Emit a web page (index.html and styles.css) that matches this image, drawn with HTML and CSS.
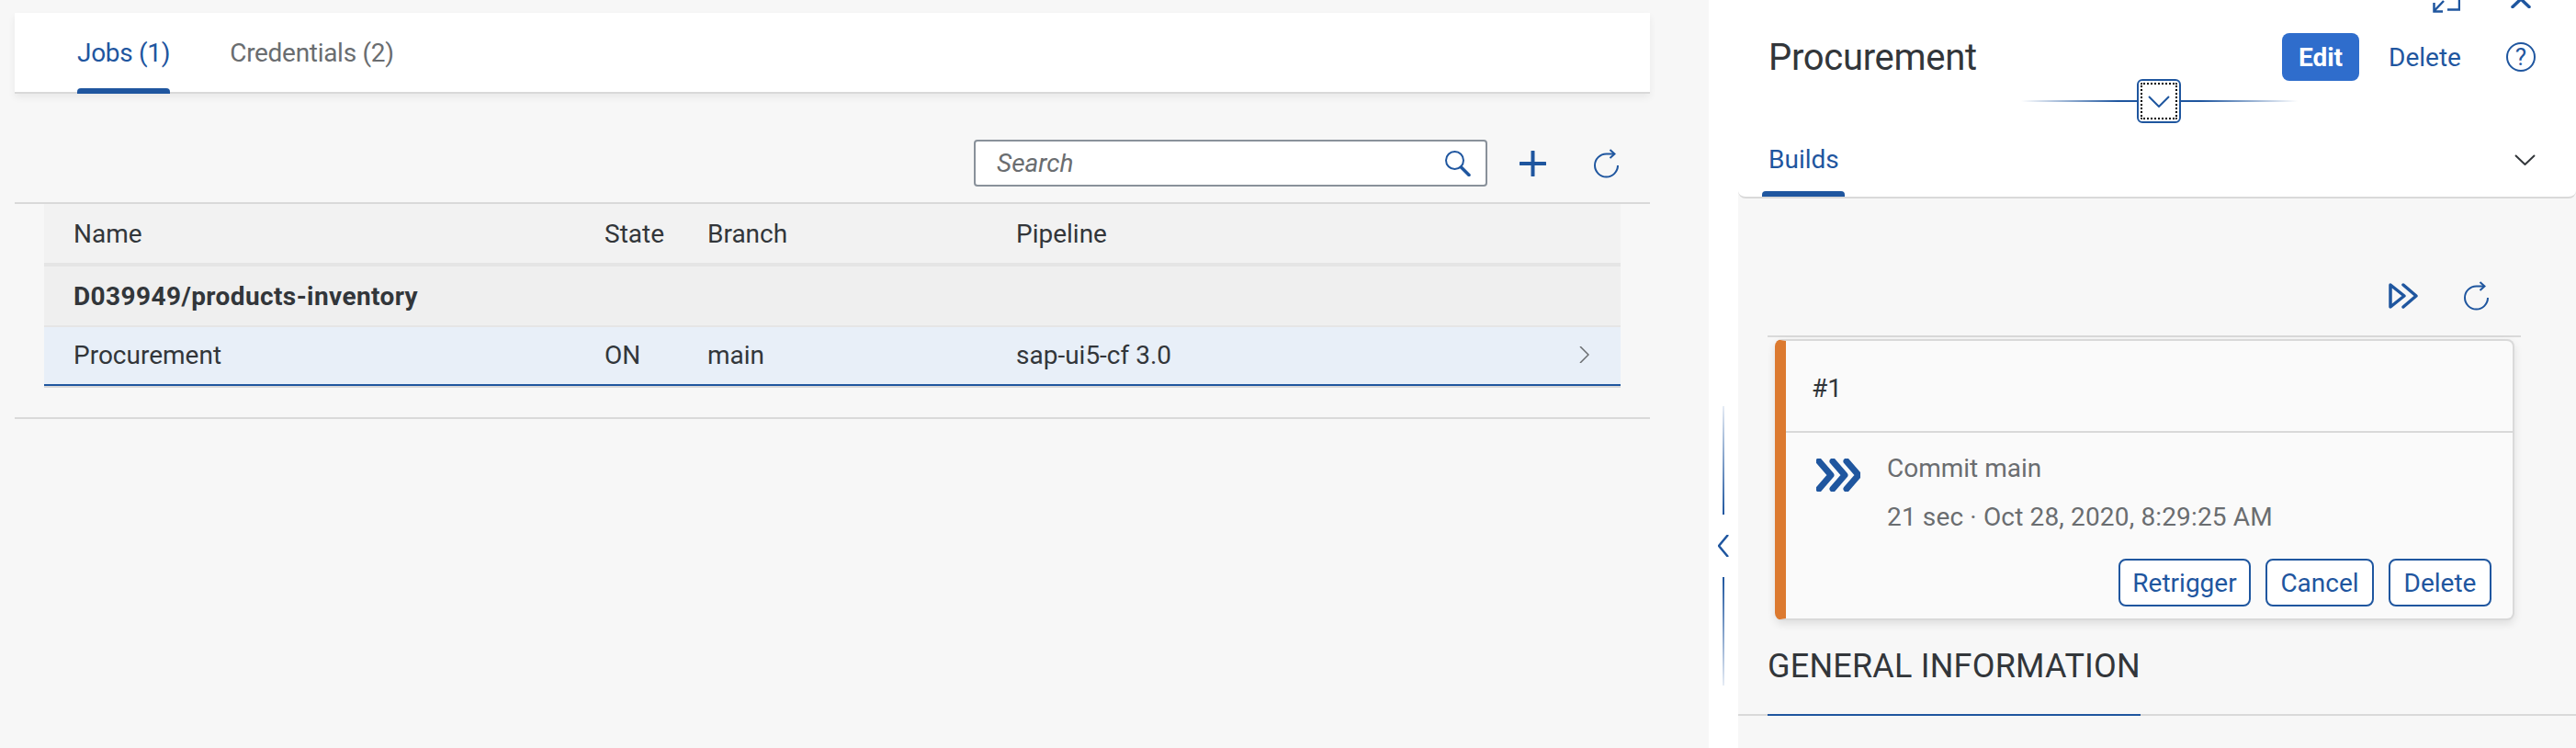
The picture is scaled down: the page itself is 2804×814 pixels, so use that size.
FILE: index.html
```html
<!DOCTYPE html>
<html lang="en">
<head>
    <meta charset="UTF-8">
    <title>Jobs</title>
    <link rel="stylesheet" href="styles.css">
</head>
<body>
    <main class="main">
        <nav class="tabbar">
            <div class="tab tab-active">Jobs (1)</div>
            <div class="tab">Credentials (2)</div>
        </nav>

        <div class="toolbar">
            <div class="search">
                <span class="search-text">Search</span>
                <svg class="icon-search" viewBox="0 0 28 28"><circle cx="10.5" cy="10.5" r="9.5"/><path d="M17.5 18l8.5 8.5" class="thick"/></svg>
            </div>
            <svg class="icon-plus" viewBox="0 0 29 28"><path d="M14.5 1v26M1 14h27"/></svg>
            <svg class="icon-refresh" viewBox="0 0 28 32"><path d="M22 5.5h-8.5A12.5 12.5 0 1 0 26 18"/><path d="M17.5 1l5 4.5-5 4.5"/></svg>
        </div>

        <div class="table-wrap">
            <table class="jobs">
                <colgroup>
                    <col class="col-name"><col class="col-state"><col class="col-branch"><col class="col-pipeline"><col class="col-nav">
                </colgroup>
                <thead>
                    <tr>
                        <th>Name</th>
                        <th>State</th>
                        <th>Branch</th>
                        <th>Pipeline</th>
                        <th></th>
                    </tr>
                </thead>
                <tbody>
                    <tr class="group-row">
                        <td colspan="5">D039949/products-inventory</td>
                    </tr>
                    <tr class="selected-row">
                        <td>Procurement</td>
                        <td>ON</td>
                        <td>main</td>
                        <td>sap-ui5-cf 3.0</td>
                        <td><svg class="icon-nav" viewBox="0 0 11 18"><path d="M1 0l9 9-9 9"/></svg></td>
                    </tr>
                </tbody>
            </table>
        </div>
    </main>

    <aside class="side">
        <div class="splitter">
            <span class="split-line split-line-top"></span>
            <svg class="icon-split" viewBox="0 0 12 24"><path d="M11 0L1 12l10 12"/></svg>
            <span class="split-line split-line-bottom"></span>
        </div>

        <div class="detail">
            <header class="detail-header">
                <div class="window-actions">
                    <svg class="icon-expand" viewBox="0 0 30 14"><path d="M12 1L1.5 12M1.5 3v9.5H11M16 10.5h13V0"/></svg>
                    <svg class="icon-close" viewBox="0 0 22 9"><path d="M2 7.5L11 -1l9 8.5"/></svg>
                </div>
                <div class="title-row">
                    <h1 class="title">Procurement</h1>
                    <button class="btn-primary">Edit</button>
                    <button class="btn-plain">Delete</button>
                    <span class="help">?</span>
                </div>
                <div class="tabs-row">
                    <div class="builds-tab">Builds</div>
                    <svg class="icon-down" viewBox="0 0 23 12"><path d="M1 1l10.5 10L22 1"/></svg>
                </div>
                <span class="collapse-line"></span>
                <div class="collapse-btn">
                    <svg viewBox="0 0 24 13"><path d="M1 1l11 11L23 1"/></svg>
                </div>
            </header>

            <section class="builds">
                <div class="builds-toolbar">
                    <svg class="icon-run" viewBox="0 0 32 28"><path d="M2 2l15 12L2 26z"/><path d="M16 2l14 12-14 12"/></svg>
                    <svg class="icon-refresh" viewBox="0 0 28 32"><path d="M22 5.5h-8.5A12.5 12.5 0 1 0 26 18"/><path d="M17.5 1l5 4.5-5 4.5"/></svg>
                </div>
                <article class="card">
                    <div class="card-head">#1</div>
                    <div class="card-body">
                        <svg class="icon-running" viewBox="0 0 48 36"><path d="M3 3l13 15L3 33M18 3l13 15-13 15M33 3l13 15-13 15"/></svg>
                        <div class="card-text">
                            <div>Commit main</div>
                            <div class="card-time">21 sec · Oct 28, 2020, 8:29:25 AM</div>
                        </div>
                    </div>
                    <div class="card-actions">
                        <button class="btn-outline btn-retrigger">Retrigger</button>
                        <button class="btn-outline btn-cancel">Cancel</button>
                        <button class="btn-outline btn-delete">Delete</button>
                    </div>
                </article>
            </section>

            <div class="section-head">
                <h2 class="section-title">GENERAL INFORMATION</h2>
            </div>
        </div>
    </aside>
</body>
</html>
```

FILE: styles.css
```css
* {
    box-sizing: border-box;
}
html, body {
    height: 100%;
}
body {
    margin: 0;
    display: flex;
    overflow: hidden;
    background-color: #f7f7f7;
    color: #32363a;
    font-family: Roboto, sans-serif;
    font-size: 28px;
}
svg {
    display: block;
    flex: none;
    fill: none;
    stroke: #1f569f;
    stroke-width: 2;
}
button {
    font-family: inherit;
    font-size: 28px;
    cursor: pointer;
}

/* left side */
.main {
    width: 1860px;
    flex: none;
    padding: 14px 64px 0 16px;
}
.tabbar {
    display: flex;
    height: 88px;
    padding-left: 68px;
    background-color: #fff;
    border-bottom: 2px solid #d9d9d9;
    box-shadow: 0 4px 8px rgba(0, 0, 0, 0.06);
}
.tab {
    position: relative;
    margin-right: 65px;
    line-height: 88px;
    letter-spacing: -0.3px;
    color: #6a6d70;
}
.tab-active {
    color: #1f569f;
}
.tab-active::after {
    content: "";
    position: absolute;
    left: 0;
    right: 0;
    bottom: -2px;
    height: 6px;
    background-color: #1f569f;
    border-radius: 4px 4px 0 0;
}
.toolbar {
    display: flex;
    align-items: center;
    justify-content: flex-end;
    margin-top: 50px;
    padding-right: 33px;
}
.search {
    display: flex;
    align-items: center;
    justify-content: space-between;
    width: 559px;
    height: 51px;
    padding: 0 16px 0 23px;
    background-color: #fff;
    border: 2px solid #89919a;
    border-radius: 4px;
}
.search-text {
    font-style: italic;
    color: #6a6d70;
}
.icon-search {
    width: 28px;
    height: 28px;
}
.icon-search .thick {
    stroke-width: 3.5;
    stroke-linecap: round;
}
.icon-plus {
    width: 29px;
    height: 28px;
    margin-left: 35px;
    margin-right: 52px;
    stroke-width: 4;
    stroke-linecap: round;
}
.icon-refresh {
    width: 28px;
    height: 32px;
}
.table-wrap {
    margin-top: 17px;
    padding: 0 32px 34px;
    border-top: 2px solid #d9d9d9;
    border-bottom: 2px solid #d9d9d9;
}
.jobs {
    width: 1716px;
    table-layout: fixed;
    border-collapse: separate;
    border-spacing: 0;
}
.col-name { width: 610px; }
.col-state { width: 112px; }
.col-branch { width: 336px; }
.col-pipeline { width: 616px; }
.col-nav { width: 42px; }
.jobs th {
    height: 68px;
    padding: 0;
    background-color: #f2f2f2;
    border-bottom: 4px solid #e5e5e5;
    font-weight: 400;
    text-align: left;
}
.jobs td {
    padding: 0;
}
.jobs th:first-child, .jobs td:first-child {
    padding-left: 32px;
}
.group-row td {
    height: 66px;
    background-color: #efefef;
    border-bottom: 2px solid #e5e5e5;
    font-weight: 700;
    letter-spacing: 0.4px;
}
.selected-row td {
    height: 64px;
    padding-bottom: 2px;
    background-color: #e8eff8;
    border-bottom: 2px solid #1f569f;
    box-shadow: 0 2px 0 #d9d9d9;
}
.icon-nav {
    width: 11px;
    height: 18px;
    margin-left: -3px;
    stroke: #6a6d70;
    stroke-width: 1.5;
}

/* right side */
.side {
    flex: 1;
    display: flex;
    background-color: #fff;
}
.splitter {
    width: 32px;
    flex: none;
    display: flex;
    flex-direction: column;
    align-items: center;
    padding-top: 442px;
}
.split-line {
    width: 2px;
    height: 118px;
}
.split-line-top {
    background: linear-gradient(to bottom, #e6ecf5, #1f569f);
}
.split-line-bottom {
    background: linear-gradient(to top, #e6ecf5, #1f569f);
}
.icon-split {
    width: 12px;
    height: 24px;
    margin: 22px 0;
    stroke-width: 2.5;
}
.detail {
    flex: 1;
    background-color: #f7f7f7;
}
.detail-header {
    position: relative;
    height: 216px;
    background-color: #fff;
    border-bottom: 2px solid #d9d9d9;
    border-radius: 0 0 8px 8px;
}
.window-actions {
    display: flex;
    justify-content: flex-end;
    height: 36px;
    padding-right: 49px;
}
.icon-expand {
    width: 30px;
    height: 14px;
    margin-right: 55px;
    stroke-width: 2.5;
}
.icon-close {
    width: 22px;
    height: 9px;
    stroke-width: 3.5;
    stroke-linecap: round;
}
.title-row {
    display: flex;
    align-items: center;
    height: 52px;
    padding: 0 44px 0 33px;
}
.title {
    flex: 1;
    margin: 0;
    font-size: 40px;
    font-weight: 400;
    letter-spacing: -0.3px;
}
.btn-primary {
    width: 84px;
    height: 52px;
    padding: 0;
    background-color: #2f6dcc;
    color: #fff;
    border: none;
    border-radius: 8px;
    font-weight: 700;
}
.btn-plain {
    width: 79px;
    margin-left: 32px;
    margin-right: 49px;
    padding: 0;
    background: none;
    border: none;
    color: #1f569f;
}
.help {
    width: 32px;
    height: 32px;
    border: 2px solid #1f569f;
    border-radius: 50%;
    color: #1f569f;
    font-size: 26px;
    line-height: 28px;
    text-align: center;
}
.tabs-row {
    display: flex;
    align-items: center;
    justify-content: space-between;
    height: 126px;
    padding: 46px 44px 0 26px;
}
.builds-tab {
    position: relative;
    padding: 0 6px 0 7px;
    line-height: 40px;
    color: #1f569f;
}
.builds-tab::after {
    content: "";
    position: absolute;
    left: 0;
    right: 0;
    bottom: -20px;
    height: 6px;
    background-color: #1f569f;
    border-radius: 4px 4px 0 0;
}
.icon-down {
    width: 23px;
    height: 12px;
    stroke: #32363a;
}
.collapse-line {
    position: absolute;
    top: 109px;
    left: 308px;
    width: 301px;
    height: 2px;
    background: linear-gradient(to right, transparent, #1f569f 35%, #1f569f 65%, transparent);
}
.collapse-btn {
    position: absolute;
    top: 86px;
    left: 434px;
    width: 48px;
    height: 48px;
    display: flex;
    align-items: center;
    justify-content: center;
    background-color: #fff;
    border: 2px solid #1f569f;
    border-radius: 6px;
    outline: 2px dotted #000;
    outline-offset: -6px;
}
.collapse-btn svg {
    width: 24px;
    height: 13px;
}
.builds {
    padding: 0 60px 0 32px;
}
.builds-toolbar {
    display: flex;
    justify-content: flex-end;
    height: 151px;
    padding: 90px 34px 0 0;
    border-bottom: 2px solid #d9d9d9;
}
.icon-run {
    width: 32px;
    height: 28px;
    margin-top: 2px;
    margin-right: 50px;
    stroke-width: 3.5;
    stroke-linejoin: round;
    stroke-linecap: round;
}
.card {
    height: 306px;
    margin: 2px 7px 0 8px;
    background-color: #fafafa;
    border: 2px solid #d9d9d9;
    border-left: 12px solid #dc7a30;
    border-radius: 8px;
    box-shadow: 0 4px 10px rgba(0, 0, 0, 0.1);
}
.card-head {
    height: 100px;
    padding-left: 28px;
    line-height: 104px;
    border-bottom: 2px solid #d9d9d9;
}
.card-body {
    display: flex;
    padding: 19px 0 0 33px;
    color: #6a6d70;
}
.icon-running {
    width: 48px;
    height: 36px;
    margin-top: 9px;
    margin-right: 29px;
    stroke-width: 7;
    stroke-linecap: round;
    stroke-linejoin: round;
}
.card-text {
    line-height: 40px;
}
.card-time {
    margin-top: 13px;
    letter-spacing: 0.15px;
}
.card-actions {
    display: flex;
    justify-content: flex-end;
    gap: 16px;
    margin-top: 25px;
    padding-right: 23px;
}
.btn-outline {
    height: 52px;
    padding: 0;
    background-color: #fff;
    border: 2px solid #1f569f;
    border-radius: 8px;
    color: #1f569f;
}
.btn-retrigger { width: 144px; }
.btn-cancel { width: 118px; }
.btn-delete { width: 112px; }
.section-head {
    height: 104px;
    padding: 28px 0 0 32px;
    border-bottom: 2px solid #d9d9d9;
}
.section-title {
    display: inline-block;
    height: 76px;
    margin: 0;
    font-size: 36px;
    font-weight: 400;
    line-height: 44px;
    letter-spacing: 0.2px;
    border-bottom: 2px solid #1f569f;
}
```
